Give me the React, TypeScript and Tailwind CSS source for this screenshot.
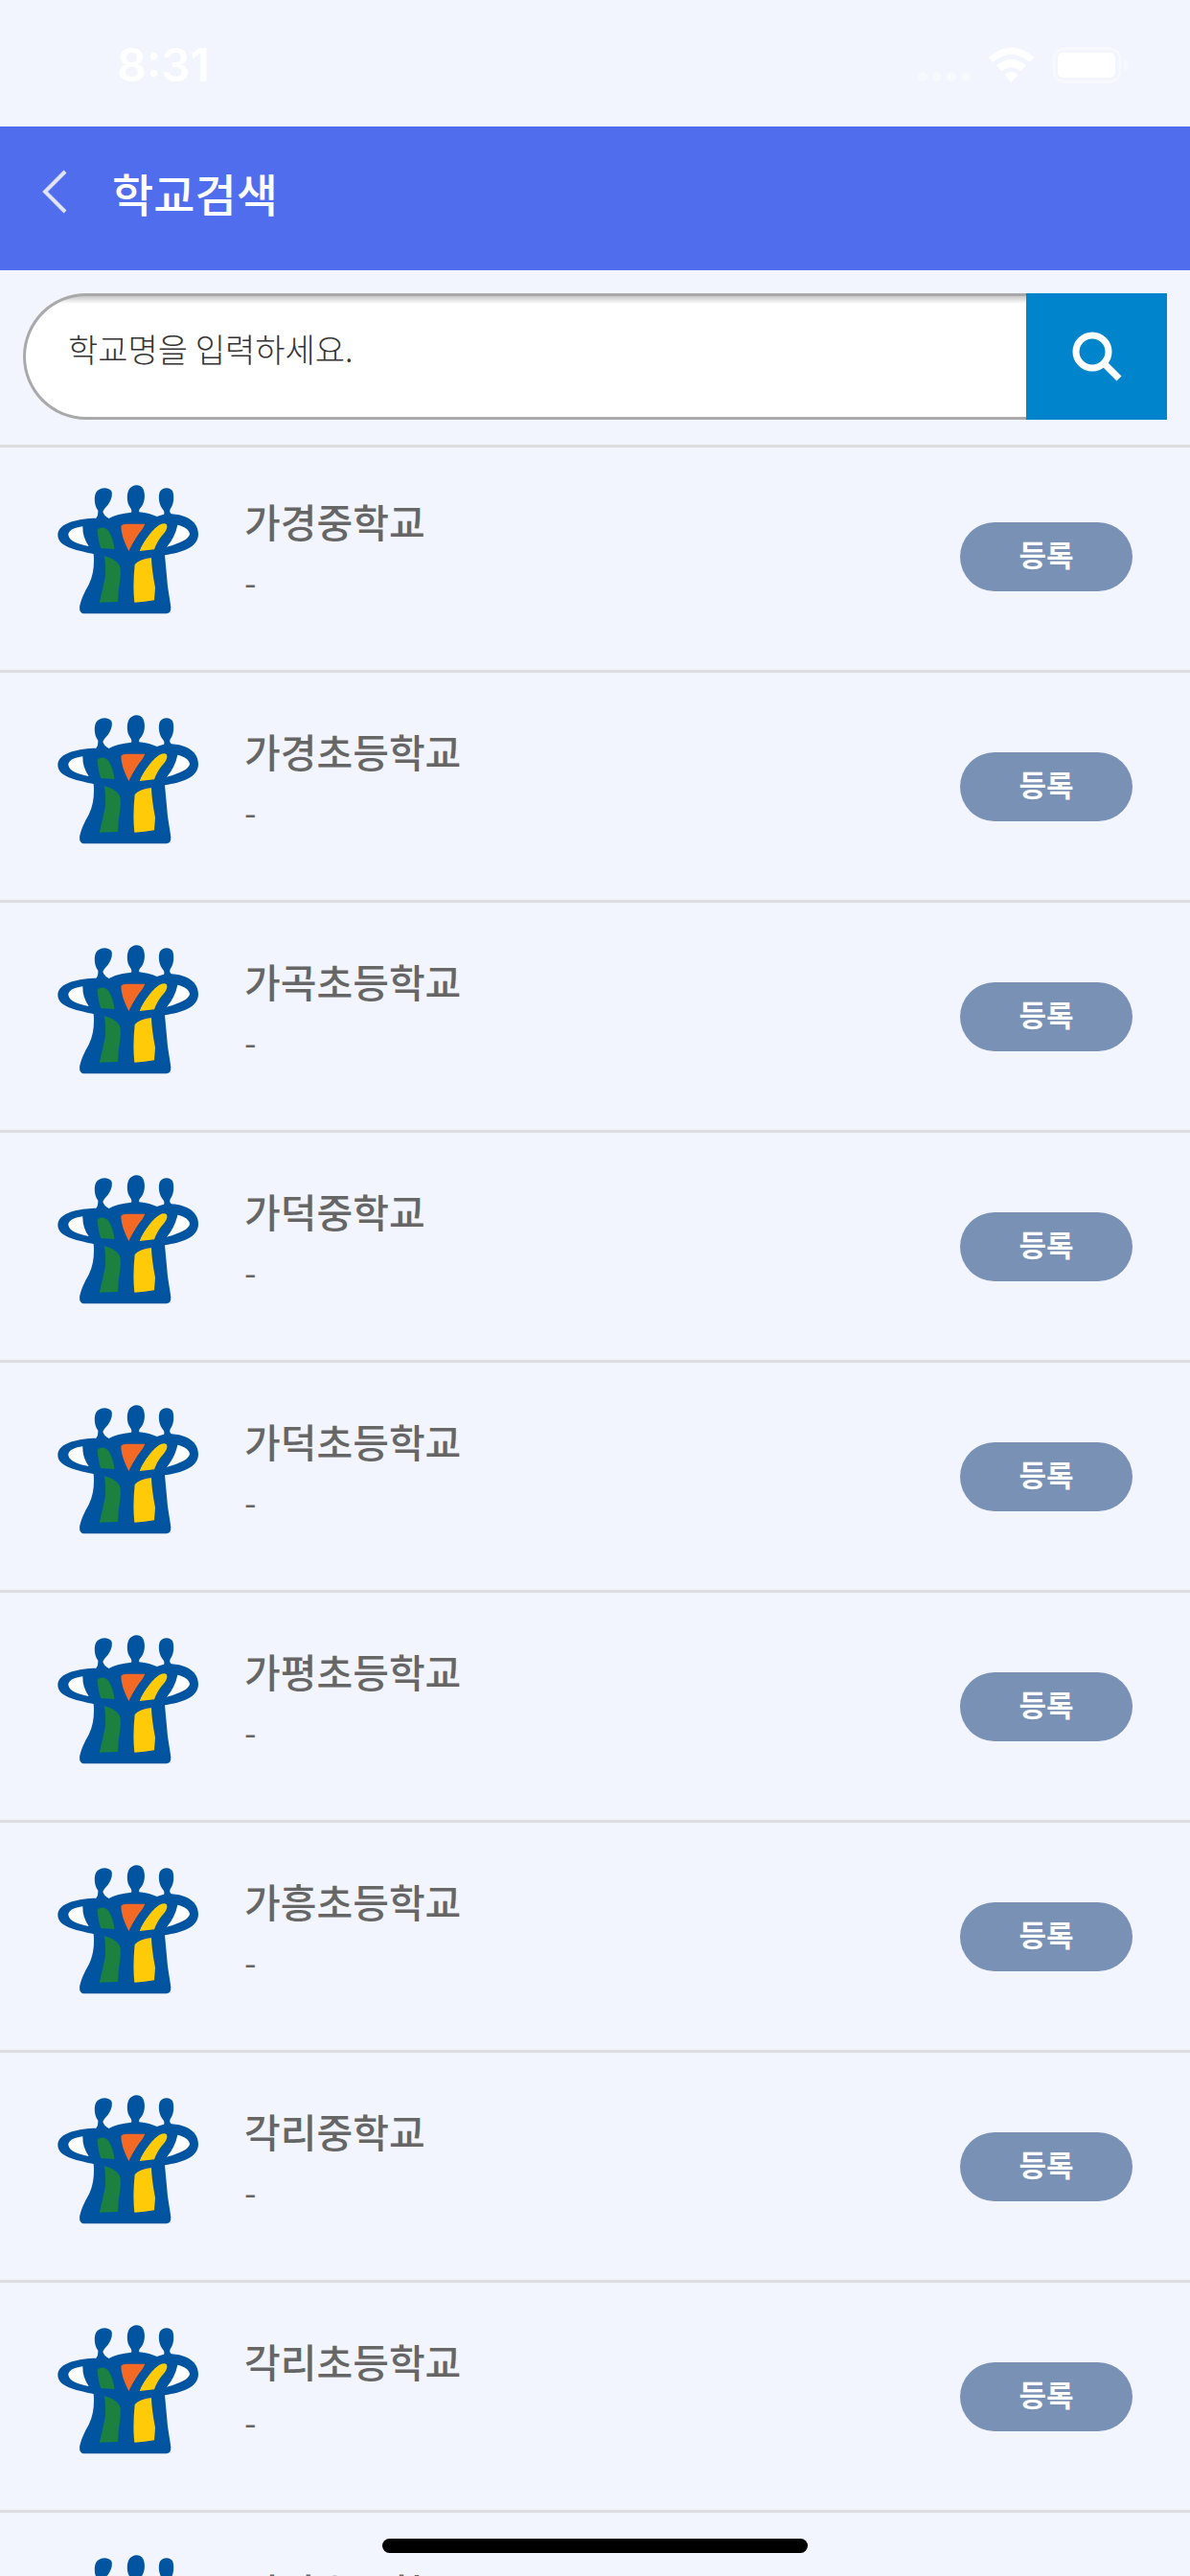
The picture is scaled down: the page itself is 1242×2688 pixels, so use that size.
import React, { useState } from 'react';

interface School {
  name: string;
  address: string;
}

const schools: School[] = [
  { name: '가경중학교', address: '-' },
  { name: '가경초등학교', address: '-' },
  { name: '가곡초등학교', address: '-' },
  { name: '가덕중학교', address: '-' },
  { name: '가덕초등학교', address: '-' },
  { name: '가평초등학교', address: '-' },
  { name: '가흥초등학교', address: '-' },
  { name: '각리중학교', address: '-' },
  { name: '각리초등학교', address: '-' },
  { name: '갈산초등학교', address: '-' },
];

const StatusBar: React.FC = () => (
  <div className="flex h-[132px] items-center justify-between pt-[4px] pr-[64px] pl-[122px] text-white">
    <span className="font-['Inter',sans-serif] text-[48px] leading-[60px] font-semibold">8:31</span>
    <div className="flex items-center">
      <svg className="h-[38px] w-[222px]" viewBox="0 0 222 38" fill="currentColor">
        <g opacity="0.4">
          <circle cx="7" cy="31" r="5" />
          <circle cx="22" cy="31" r="5" />
          <circle cx="37" cy="31" r="5" />
          <circle cx="52" cy="31" r="5" />
        </g>
        <path d="M75.500 11Q99.500 -10 123.500 11L118.500 16Q99.500 -1 80.500 16Z" />
        <path d="M84 19.500Q99.500 6.500 115 19.500L109 25Q99.500 17.500 90 25Z" />
        <path d="M92.500 29Q99.500 23 106.500 29L99.500 37Z" />
        <rect x="144" y="2" width="69" height="34" rx="10" fill="none" stroke="currentColor" strokeWidth="3" opacity="0.4" />
        <rect x="148" y="6" width="60" height="26" rx="5" />
        <path d="M217 13Q221 15 221 19Q221 24 217 26Z" opacity="0.4" />
      </svg>
    </div>
  </div>
);

const SchoolLogo: React.FC = () => (
  <svg className="h-[137px] w-[148px] shrink-0" viewBox="60 45 444 411" role="img" aria-label="학교 로고">
    {/* arms and bodies */}
    <path
      fill="#0054a0"
      d="M181 152Q188 145 187 128C174 112 174 84 181 71C190 57 216 53 228 66C235 76 227 98 218 110Q206 122 202 132Q206 145 221 153Q246 138 291 134Q294 127 288 119C276 105 276 75 284 62C294 46 318 43 328 60C335 75 335 99 323 116Q313 125 316 133Q350 137 371 147L393 140Q397 132 389 124C376 108 375 81 381 68C390 55 412 54 420 67C426 80 425 109 414 122Q408 132 417 139C450 141 501 155 501 202C501 244 449 260 396 268L399 300L405 365L415 430Q416 452 399 451L140 451Q126 446 130 425Q136 398 158 360Q178 320 173 264C112 252 61 240 61 205C61 164 132 153 181 152Z"
    />
    <path fill="#fff" d="M139 178C114 181 93 190 94 205C96 225 130 235 158 240Q138 212 139 178Z" />
    <path fill="#fff" d="M436 173C459 178 474 190 474 202C470 223 429 234 402 243Q429 209 436 173Z" />
    {/* colour panels */}
    <path fill="#1c8140" d="M185 190C192 176 212 180 222 195Q233 213 239 249L195 246Q186 216 185 190Z" />
    <path fill="#1c8140" d="M207 271C230 276 252 290 256 305Q260 330 252 370L249 414L191 416Q202 376 209 337Q212 298 207 271Z" />
    <path fill="#f46a25" d="M259 176Q265 169 280 170L334 170L326 186Q303 214 283 255Q258 206 259 176Z" />
    <path fill="#ffcb08" d="M317 255Q326 229 355 194Q386 161 401 171Q408 182 393 200Q374 219 363 250Z" />
    <path fill="#ffcb08" d="M302 297Q316 281 354 276Q355 313 366 370L363 409Q335 415 301 416Q295 367 302 297Z" />
  </svg>
);

const SchoolRow: React.FC<{ school: School }> = ({ school }) => (
  <li className="flex items-start border-b-[3px] border-[#dddddd] pt-[43px] pr-[60px] pb-[57px] pl-[60px] first:pt-[38px]">
    <SchoolLogo />
    <div className="ml-[47px] flex-1 pt-[6px] text-[#666666]">
      <h2 className="text-[41px] leading-[64px] font-medium">{school.name}</h2>
      <p className="text-[36px] leading-[62px]">{school.address}</p>
    </div>
    <button
      type="button"
      className="mt-[40px] h-[72px] w-[180px] rounded-full bg-[#7a91b6] pb-[6px] text-[31px] font-bold text-white"
    >
      등록
    </button>
  </li>
);

const App: React.FC = () => {
  const [keyword, setKeyword] = useState('');

  return (
    <div className="relative h-screen overflow-hidden bg-[#f2f5fd] font-['Noto_Sans_CJK_KR',sans-serif]">
      <StatusBar />

      <header className="flex h-[150px] items-center bg-[#4f6dec] text-white">
        <button type="button" aria-label="뒤로" className="ml-[44px] mb-[14px]">
          <svg className="h-[46px] w-[26px]" viewBox="0 0 26 46" fill="none" stroke="#dfe4fb" strokeWidth="4">
            <path d="M24 2L3 23L24 44" />
          </svg>
        </button>
        <h1 className="ml-[47px] pb-[12px] text-[47px] leading-[70px] font-medium">학교검색</h1>
      </header>

      <form
        className="flex border-b-[3px] border-[#dddddd] px-6 pt-6 pb-[26px]"
        onSubmit={e => e.preventDefault()}
      >
        <input
          type="text"
          aria-label="학교명"
          placeholder="학교명을 입력하세요."
          value={keyword}
          onChange={e => setKeyword(e.target.value)}
          className="h-[132px] min-w-0 flex-1 rounded-l-full border-[3px] border-r-0 border-[#a9a9a9] bg-white bg-linear-[#c8c8c8,#ffffff_8px] pb-[18px] pl-[44px] text-[34px] font-light text-[#333333] outline-none placeholder:text-[#333333]"
        />
        <button type="submit" aria-label="검색" className="flex h-[132px] w-[147px] items-center justify-center bg-[#0085cd]">
          <svg className="h-[52px] w-[52px]" viewBox="0 0 52 52" fill="none" stroke="#fff" strokeWidth="7">
            <circle cx="21" cy="21" r="17" />
            <path d="M33 33L49 49" />
          </svg>
        </button>
      </form>

      <ul>
        {schools.map(school => (
          <SchoolRow key={school.name} school={school} />
        ))}
      </ul>

      {/* Home indicator */}
      <div className="absolute bottom-[24px] left-1/2 h-[15px] w-[444px] -translate-x-1/2 rounded-full bg-black" />
    </div>
  );
};

export default App;
